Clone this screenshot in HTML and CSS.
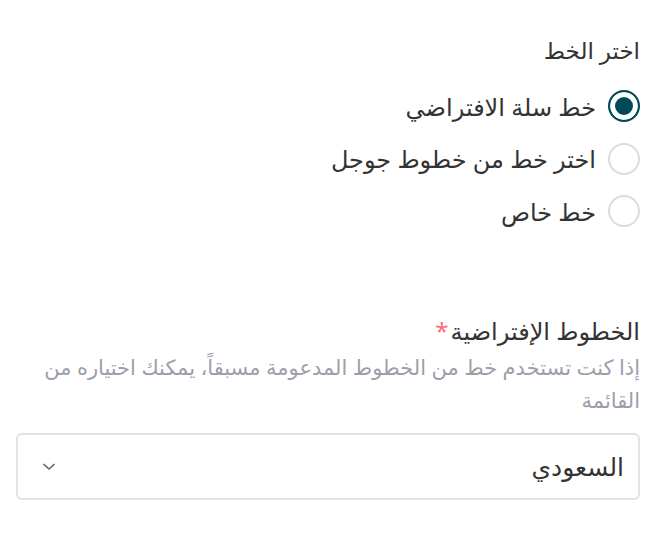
FILE: index.html
```html
<!DOCTYPE html>
<html lang="ar" dir="rtl">
<head>
    <meta charset="UTF-8">
    <title>اختر الخط</title>
    <meta name="viewport" content="width=device-width, initial-scale=1">
    <link rel="stylesheet" href="styles.css">
</head>
<body>
<div class="page">
    <div class="group">
        <p class="group-title">اختر الخط</p>
        <label class="radio">
            <input type="radio" name="font" checked>
            <span class="dot"></span>
            <span>خط سلة الافتراضي</span>
        </label>
        <label class="radio">
            <input type="radio" name="font">
            <span class="dot"></span>
            <span>اختر خط من خطوط جوجل</span>
        </label>
        <label class="radio">
            <input type="radio" name="font">
            <span class="dot"></span>
            <span>خط خاص</span>
        </label>
    </div>

    <div class="field">
        <label class="field-label">الخطوط الإفتراضية<span class="req">*</span></label>
        <p class="hint">إذا كنت تستخدم خط من الخطوط المدعومة مسبقاً، يمكنك اختياره من القائمة</p>
        <div class="select">
            <span>السعودي</span>
            <svg width="14" height="9" viewBox="0 0 14 9">
                <path d="M1.5 2l5.5 5 5.5-5" fill="none" stroke="#5a6475" stroke-width="1.6"/>
            </svg>
        </div>
    </div>
</div>
</body>
</html>
```

FILE: styles.css
```css
body {
    margin: 0;
    font-family: "Noto Sans", "DejaVu Sans", sans-serif;
    color: #333333;
    background-color: white;
}

.page {
    padding: 34px 21px 0 16px;
}

.group-title {
    margin: 0 0 14px 0;
    font-size: 23px;
    line-height: 32px;
}

.radio {
    display: flex;
    align-items: center;
    gap: 12px;
    height: 52.5px;
    font-size: 24px;
    cursor: pointer;
}

.radio input {
    display: none;
}

.dot {
    width: 28px;
    height: 28px;
    border: 2px solid #dcdcdc;
    border-radius: 50%;
    box-sizing: content-box;
    flex-shrink: 0;
}

.radio input:checked + .dot {
    border-color: #004a56;
    background-color: #004a56;
    box-shadow: inset 0 0 0 5px white;
}

.field {
    margin-top: 76px;
}

.field-label {
    display: block;
    font-size: 24px;
    line-height: 34px;
}

.req {
    color: #f87171;
    margin-right: 2px;
}

.hint {
    margin: 3px 0 16px 0;
    font-size: 21px;
    line-height: 33px;
    color: #9e9eaa;
}

.select {
    display: flex;
    align-items: center;
    justify-content: space-between;
    box-sizing: border-box;
    height: 67px;
    padding: 0 14px 0 24px;
    border: 2px solid #e2e2e2;
    border-radius: 6px;
    font-size: 25px;
}
```
